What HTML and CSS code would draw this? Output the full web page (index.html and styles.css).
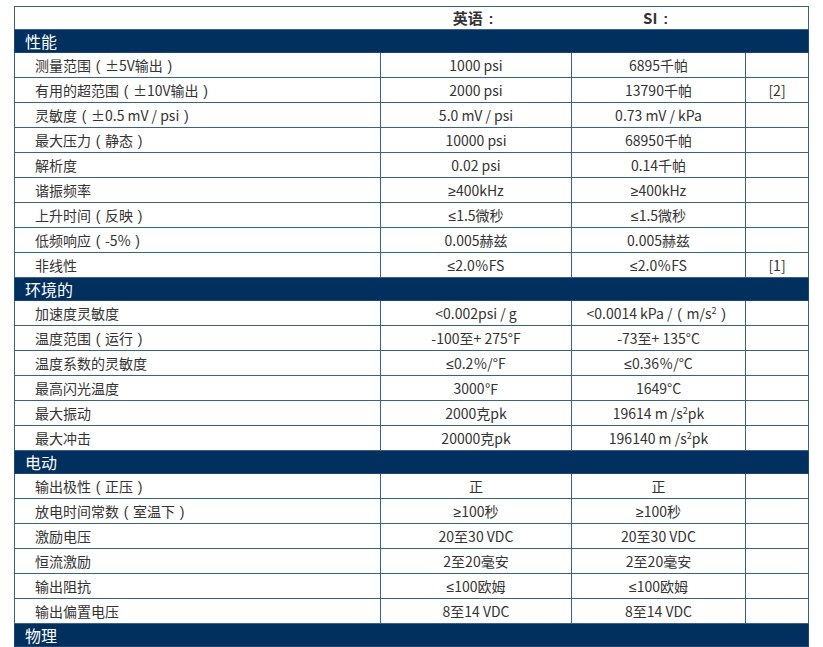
FILE: index.html
```html
<!DOCTYPE html>
<html lang="zh-CN">
<head>
<meta charset="utf-8">
<title>规格</title>
<link rel="stylesheet" href="styles.css">
</head>
<body>
<table class="spec">
  <colgroup>
    <col class="c-label"><col class="c-en"><col class="c-si"><col class="c-note">
  </colgroup>
  <thead>
    <tr class="head">
      <th></th><th>英语<span class="p">:</span></th><th>SI<span class="p">:</span></th><th></th>
    </tr>
  </thead>
  <tbody>
    <tr class="section"><td colspan="4">性能</td></tr>
    <tr><td class="label">测量范围<span class="p">(</span>±5V输出<span class="p">)</span></td><td>1000 psi</td><td>6895千帕</td><td></td></tr>
    <tr><td class="label">有用的超范围<span class="p">(</span>±10V输出<span class="p">)</span></td><td>2000 psi</td><td>13790千帕</td><td>[2]</td></tr>
    <tr><td class="label">灵敏度<span class="p">(</span>±0.5 mV / psi<span class="p">)</span></td><td>5.0 mV / psi</td><td>0.73 mV / kPa</td><td></td></tr>
    <tr><td class="label">最大压力<span class="p">(</span>静态<span class="p">)</span></td><td>10000 psi</td><td>68950千帕</td><td></td></tr>
    <tr><td class="label">解析度</td><td>0.02 psi</td><td>0.14千帕</td><td></td></tr>
    <tr><td class="label">谐振频率</td><td><span class="sym">≥</span>400kHz</td><td><span class="sym">≥</span>400kHz</td><td></td></tr>
    <tr><td class="label">上升时间<span class="p">(</span>反映<span class="p">)</span></td><td><span class="sym">≤</span>1.5微秒</td><td><span class="sym">≤</span>1.5微秒</td><td></td></tr>
    <tr><td class="label">低频响应<span class="p">(</span>-5%<span class="p">)</span></td><td>0.005赫兹</td><td>0.005赫兹</td><td></td></tr>
    <tr><td class="label">非线性</td><td><span class="sym">≤</span>2.0<span class="pct">%</span>FS</td><td><span class="sym">≤</span>2.0<span class="pct">%</span>FS</td><td>[1]</td></tr>
    <tr class="section"><td colspan="4">环境的</td></tr>
    <tr><td class="label">加速度灵敏度</td><td>&lt;0.002psi / g</td><td>&lt;0.0014 kPa /<span class="p">(</span>m/s<sup>2</sup><span class="p">)</span></td><td></td></tr>
    <tr><td class="label">温度范围<span class="p">(</span>运行<span class="p">)</span></td><td>-100至+ 275°F</td><td>-73至+ 135°C</td><td></td></tr>
    <tr><td class="label">温度系数的灵敏度</td><td><span class="sym">≤</span>0.2<span class="pct">%</span>/°F</td><td><span class="sym">≤</span>0.36<span class="pct">%</span>/°C</td><td></td></tr>
    <tr><td class="label">最高闪光温度</td><td>3000℉</td><td>1649°C</td><td></td></tr>
    <tr><td class="label">最大振动</td><td>2000克pk</td><td>19614 m /s<sup>2</sup>pk</td><td></td></tr>
    <tr><td class="label">最大冲击</td><td>20000克pk</td><td>196140 m /s<sup>2</sup>pk</td><td></td></tr>
    <tr class="section"><td colspan="4">电动</td></tr>
    <tr><td class="label">输出极性<span class="p">(</span>正压<span class="p">)</span></td><td>正</td><td>正</td><td></td></tr>
    <tr><td class="label">放电时间常数<span class="p">(</span>室温下<span class="p">)</span></td><td><span class="sym">≥</span>100秒</td><td><span class="sym">≥</span>100秒</td><td></td></tr>
    <tr><td class="label">激励电压</td><td>20至30 VDC</td><td>20至30 VDC</td><td></td></tr>
    <tr><td class="label">恒流激励</td><td>2至20毫安</td><td>2至20毫安</td><td></td></tr>
    <tr><td class="label">输出阻抗</td><td><span class="sym">≤</span>100欧姆</td><td><span class="sym">≤</span>100欧姆</td><td></td></tr>
    <tr><td class="label">输出偏置电压</td><td>8至14 VDC</td><td>8至14 VDC</td><td></td></tr>
    <tr class="section"><td colspan="4">物理</td></tr>
  </tbody>
</table>
</body>
</html>
```

FILE: styles.css
```css
html, body {
  background: #ffffff;
}
body {
  margin: 6px 14px 0 14px;
  font-family: "Noto Sans CJK SC", "Noto Sans", sans-serif;
  font-size: 14px;
  color: #333333;
}
.spec {
  width: 100%;
  border-collapse: collapse;
  table-layout: fixed;
  border: 1px solid #3a6189;
}
.c-label { width: 366px; }
.c-en { width: 191px; }
.c-si { width: 174px; }
.c-note { width: 63px; }

.spec td {
  border: 1px solid #3a6189;
  padding: 0;
  height: 24px;
  line-height: 24px;
  text-align: center;
  white-space: nowrap;
}
.spec td.label {
  text-align: left;
  padding-left: 20px;
}
.head th {
  border: none;
  border-bottom: 1px solid #3a6189;
  padding: 0;
  height: 22px;
  line-height: 22px;
  font-size: 15px;
  font-weight: bold;
  color: #333333;
  text-align: center;
}
.section td {
  background: #01305e;
  color: #ffffff;
  font-size: 16px;
  text-align: left;
  padding-left: 10px;
  height: 22px;
  line-height: 22px;
  border-color: #1e4670;
}
.p {
  display: inline-block;
  width: 1em;
  line-height: 1;
  text-align: center;
  font-family: "Liberation Sans", sans-serif;
  font-weight: normal;
}
.head .p {
  font-weight: bold;
  width: 1.1em;
}
.sym {
  font-family: "Liberation Sans", sans-serif;
  line-height: 1;
}
.pct {
  display: inline-block;
  width: 1em;
  line-height: 1;
  text-align: center;
}
sup {
  font-size: 9px;
  line-height: 0;
  vertical-align: 5px;
}
```
